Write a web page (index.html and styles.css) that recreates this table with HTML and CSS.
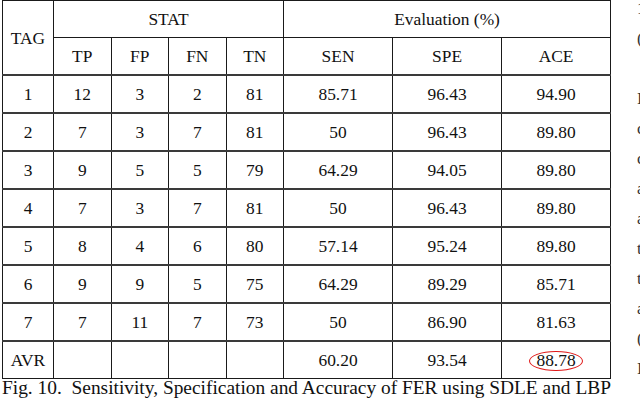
FILE: index.html
```html
<!DOCTYPE html>
<html>
<head>
<meta charset="utf-8">
<link rel="stylesheet" href="styles.css">
</head>
<body>
<div class="page">
  <div class="figure">
    <table class="stats">
      <colgroup>
        <col class="c-tag"><col class="c-stat"><col class="c-stat"><col class="c-stat"><col class="c-stat">
        <col class="c-eval"><col class="c-eval"><col class="c-eval">
      </colgroup>
      <thead>
        <tr class="r-top">
          <th rowspan="2">TAG</th>
          <th colspan="4">STAT</th>
          <th colspan="3">Evaluation (%)</th>
        </tr>
        <tr>
          <th>TP</th><th>FP</th><th>FN</th><th>TN</th>
          <th>SEN</th><th>SPE</th><th>ACE</th>
        </tr>
      </thead>
      <tbody>
        <tr><td>1</td><td>12</td><td>3</td><td>2</td><td>81</td><td>85.71</td><td>96.43</td><td>94.90</td></tr>
        <tr><td>2</td><td>7</td><td>3</td><td>7</td><td>81</td><td>50</td><td>96.43</td><td>89.80</td></tr>
        <tr><td>3</td><td>9</td><td>5</td><td>5</td><td>79</td><td>64.29</td><td>94.05</td><td>89.80</td></tr>
        <tr><td>4</td><td>7</td><td>3</td><td>7</td><td>81</td><td>50</td><td>96.43</td><td>89.80</td></tr>
        <tr><td>5</td><td>8</td><td>4</td><td>6</td><td>80</td><td>57.14</td><td>95.24</td><td>89.80</td></tr>
        <tr><td>6</td><td>9</td><td>9</td><td>5</td><td>75</td><td>64.29</td><td>89.29</td><td>85.71</td></tr>
        <tr><td>7</td><td>7</td><td>11</td><td>7</td><td>73</td><td>50</td><td>86.90</td><td>81.63</td></tr>
        <tr class="r-avg"><td>AVR</td><td></td><td></td><td></td><td></td><td>60.20</td><td>93.54</td><td><span class="circled">88.78</span></td></tr>
      </tbody>
    </table>
    <p class="caption">Fig. 10.&nbsp; Sensitivity, Specification and Accuracy of FER using SDLE and LBP</p>
  </div>
  <div class="side">
    <span>1</span>
    <span>(</span>
    <span>&nbsp;</span>
    <span>I</span>
    <span>c</span>
    <span>c</span>
    <span>a</span>
    <span>a</span>
    <span>t</span>
    <span>t</span>
    <span>a</span>
    <span>(</span>
    <span>I</span>
  </div>
</div>
</body>
</html>
```

FILE: styles.css
```css
html, body {
  margin: 0;
  padding: 0;
  background: #fff;
  width: 640px;
  height: 405px;
  overflow: hidden;
}

.page {
  display: flex;
  font-family: "Liberation Serif", "Times New Roman", serif;
  color: #111;
}

.figure {
  width: 612px;
  padding-left: 2px;
  flex: none;
}

.stats {
  border-collapse: collapse;
  table-layout: fixed;
  width: 608px;
  font-size: 17.4px;
}

.c-tag { width: 51px; }
.c-stat { width: 57.5px; }
.c-eval { width: 109px; }

.stats th,
.stats td {
  border: 1px solid #1a1a1a;
  text-align: center;
  vertical-align: middle;
  font-weight: normal;
  padding: 0;
  height: 36px;
  line-height: 20px;
}

.stats tbody tr td { border-top: 2px solid #3a3a3a; }

.circled {
  position: relative;
  display: inline-block;
}

.circled::after {
  content: "";
  position: absolute;
  left: -7px;
  right: -7px;
  top: 1px;
  bottom: -1px;
  border: 1.5px solid #e01818;
  border-radius: 50%;
}

.caption {
  margin: -2px 0 0 0;
  font-size: 19.4px;
  line-height: 22px;
  white-space: nowrap;
  color: #111;
}

.side {
  flex: none;
  width: 20px;
  padding-left: 23px;
  margin-top: -6px;
  display: flex;
  flex-direction: column;
  font-size: 17px;
  line-height: 30px;
  color: #333;
}

.side span {
  display: block;
  height: 30px;
}
```
